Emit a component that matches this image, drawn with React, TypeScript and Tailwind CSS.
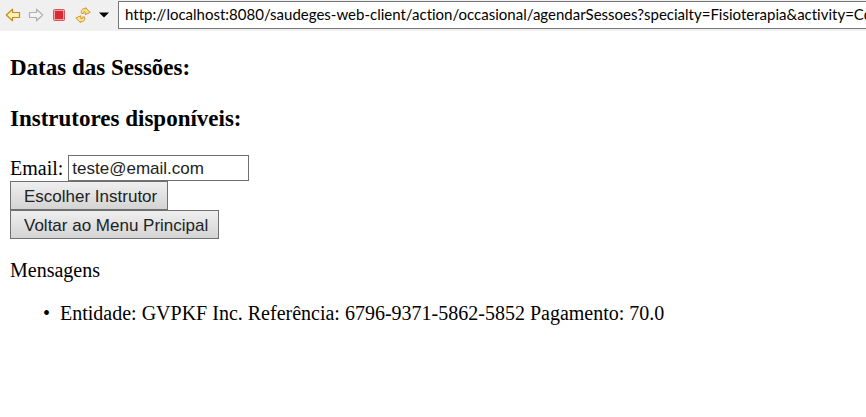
import { useState } from "react";

function BackIcon() {
  return (
    <svg width="16" height="16" viewBox="0 0 16 16" aria-hidden="true">
      <path d="M1.3 8 7.5 2.2V5.5H14.5V10.5H7.5V13.8Z" fill="#fdf0b4" stroke="#c48a20" strokeWidth="1.2" strokeLinejoin="round" />
    </svg>
  );
}

function ForwardIcon() {
  return (
    <svg width="16" height="16" viewBox="0 0 16 16" aria-hidden="true">
      <path d="M14.7 8 8.5 2.2V5.5H1.5V10.5H8.5V13.8Z" fill="#f4f4f4" stroke="#b0b0b0" strokeWidth="1.2" strokeLinejoin="round" />
    </svg>
  );
}

function StopIcon() {
  return (
    <svg width="16" height="16" viewBox="0 0 16 16" aria-hidden="true">
      <rect x="2.5" y="2.5" width="11" height="11" rx="1" fill="#f3a3a6" stroke="#d0595e" />
      <rect x="4" y="4" width="8" height="8" fill="#dd2733" />
    </svg>
  );
}

function RefreshIcon() {
  return (
    <svg width="16" height="16" viewBox="0 0 16 16" aria-hidden="true">
      <g fill="#fbe08a" stroke="#c68d26" strokeWidth="0.9" strokeLinejoin="round">
        <path d="M6.6 6.6C5.4 3.6 7.2 1.2 10.4 1.8L10.6 .6 15.2 5.4 10.2 7.6 10.2 4.9C8.9 4.4 8.2 5.1 8.6 6.2Z" />
        <path d="M9.4 9.8C10.6 12.8 8.8 15.2 5.6 14.6L5.4 15.6 .8 11 5.8 8.8 5.8 11.5C7.1 12 7.8 11.3 7.4 10.2Z" />
      </g>
    </svg>
  );
}

function CaretIcon() {
  return (
    <svg width="10" height="6" viewBox="0 0 10 6" aria-hidden="true">
      <path d="M0 .5H10L5 5.5Z" fill="#000" />
    </svg>
  );
}

function Toolbar() {
  const [url, setUrl] = useState(
    "http://localhost:8080/saudeges-web-client/action/occasional/agendarSessoes?specialty=Fisioterapia&activity=Consulta",
  );
  return (
    <header className="flex h-[31px] items-start bg-[#f0f0f0] pt-px pl-[5px]">
      <div className="flex h-7 items-center gap-2">
        <div className="flex items-center gap-[7px]">
          <button type="button" aria-label="Back"><BackIcon /></button>
          <button type="button" aria-label="Forward"><ForwardIcon /></button>
          <button type="button" aria-label="Stop"><StopIcon /></button>
        </div>
        <button type="button" aria-label="Refresh"><RefreshIcon /></button>
        <button type="button" aria-label="History"><CaretIcon /></button>
      </div>
      <input
        aria-label="URL"
        value={url}
        onChange={(e) => setUrl(e.target.value)}
        className="ml-[9px] h-7 min-w-0 flex-1 border border-r-0 border-[#767676] bg-white pb-[2px] pl-[6px] font-['Lato','Noto_Sans',sans-serif] text-[15px] text-black outline-none [font-variant-ligatures:none]"
      />
    </header>
  );
}

const buttonClass =
  "h-[29px] border border-[#707070] bg-linear-to-b from-[#efefef] to-[#d4d4d4] pt-[3px] pr-[10px] pl-[13px] font-['Liberation_Sans',Arial,sans-serif] text-[17px] leading-5 text-[#222]";

export default function App() {
  const [email, setEmail] = useState("teste@email.com");
  return (
    <div className="min-h-screen bg-white font-['Liberation_Serif','Times_New_Roman',serif] text-xl leading-[23px] text-black">
      <Toolbar />
      <main className="px-[10px] pt-[23px]">
        <h3 className="text-[23px] leading-[27px] font-bold">Datas das Sessões:</h3>
        <h3 className="mt-6 text-[23px] leading-[27px] font-bold">Instrutores disponíveis:</h3>
        <form className="mt-[23px] flex flex-col items-start" onSubmit={(e) => e.preventDefault()}>
          <div className="flex items-center gap-[5px]">
            <label htmlFor="email">Email:</label>
            <input
              id="email"
              value={email}
              onChange={(e) => setEmail(e.target.value)}
              className="h-[26px] w-[181px] border border-[#707070] bg-white px-[3px] pt-[2px] font-['Liberation_Sans',Arial,sans-serif] text-[17px] text-[#222] outline-none"
            />
          </div>
          <button type="submit" className={buttonClass}>Escolher Instrutor</button>
          <button type="button" className={buttonClass}>Voltar ao Menu Principal</button>
        </form>
        <p className="mt-5">Mensagens</p>
        <ul className="mt-5 list-['•__'] pl-[50px]">
          <li>Entidade: GVPKF Inc. Referência: 6796-9371-5862-5852 Pagamento: 70.0</li>
        </ul>
      </main>
    </div>
  );
}
